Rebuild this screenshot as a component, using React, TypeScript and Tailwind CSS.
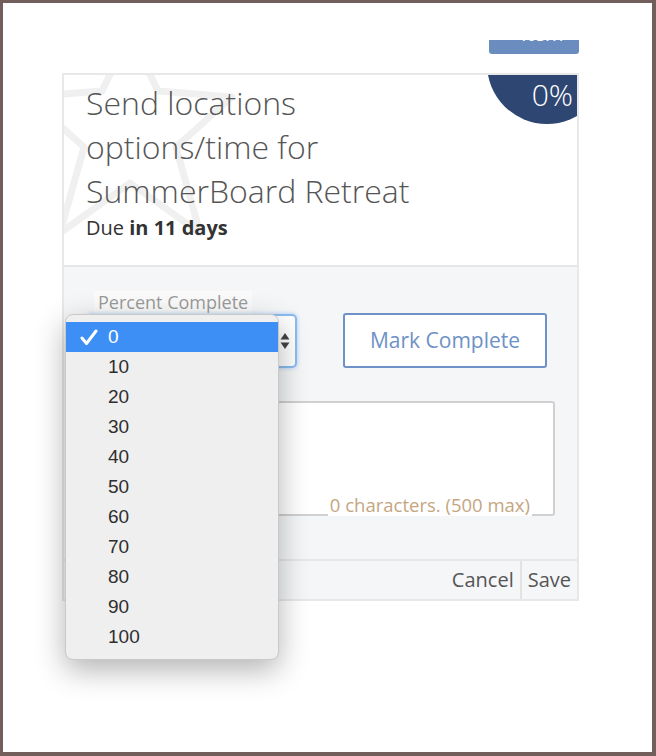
const options = [0, 10, 20, 30, 40, 50, 60, 70, 80, 90, 100]

const font = { fontFamily: '"Open Sans", "Liberation Sans", sans-serif' }

export default function App() {
  return (
    <div
      className="h-[756px] w-[656px] border-t-[3px] border-l-[3px] border-r-4 border-b-4 border-[#725f5b] bg-white"
      style={font}>
      <div className="flex justify-end pr-[73px] pt-[37px]">
        <div className="flex h-[14px] w-[90px] items-end justify-center overflow-hidden rounded-b-[3px] bg-[#6a8cbf]">
          <span className="mb-[10px] text-[20px] leading-none text-white">+ Item</span>
        </div>
      </div>

      <div className="ml-[59px] mt-[19px] w-[517px] border-2 border-[#e8e8e8]">
        {/* header */}
        <div className="relative overflow-hidden border-b-2 border-[#e6e6e6] bg-white px-[22px] pb-[25px] pt-[6px]">
          <svg
            className="pointer-events-none absolute left-[-2px] top-[-2px]"
            width="200"
            height="200"
            viewBox="0 0 200 200"
            fill="none">
            <path
              d="M68 -40 L96 18 L170 24 L114 74 L138 160 L68 110 L-2 160 L22 74 L-34 24 L40 18 Z"
              stroke="#f0f0f0"
              strokeWidth="7"
              strokeLinejoin="round"
            />
          </svg>
          <div className="absolute left-[423px] top-[-71px] h-[120px] w-[120px] rounded-full bg-[#2e4672]" />
          <div className="absolute right-[4px] top-[5px] text-[30px] font-light leading-none text-white">0%</div>
          <h1 className="relative text-[32px] font-light leading-[44px] text-[#555]">
            Send locations
            <br />
            options/time for
            <br />
            SummerBoard Retreat
          </h1>
          <p className="relative mt-[3px] text-[20px] leading-6 text-[#333]">
            Due <span className="font-bold">in 11 days</span>
          </p>
        </div>

        {/* body */}
        <div className="bg-[#f5f6f8] px-[22px] pt-6">
          <div className="flex items-end gap-[46px]">
            <div className="flex flex-col">
              <span className="ml-2 self-start bg-[#fafafa] px-1 text-[18px] leading-[23px] text-[#9a9a9a]">
                Percent Complete
              </span>
              <div className="relative flex h-[54px] w-[211px] items-center justify-end rounded-[5px] border-2 border-[#8bbcf0] bg-white pr-[5px] shadow-[0_0_4px_#a9cdf5]">
                <svg width="10" height="18" viewBox="0 0 10 18">
                  <path d="M5 1 L9.5 7.5 H0.5 Z" fill="#444" />
                  <path d="M5 17 L9.5 10.5 H0.5 Z" fill="#444" />
                </svg>
                {/* native popup */}
                <div
                  className="absolute left-[-23px] top-[-2px] z-10 w-[214px] rounded-[8px] border border-[#c9c9c9] bg-[#efefef] py-[7px] shadow-[0_10px_30px_rgba(0,0,0,0.3)]"
                  style={{ fontFamily: '"Liberation Sans", Arial, sans-serif' }}>
                  {options.map((o) => (
                    <div
                      key={o}
                      className={`flex h-[30px] items-center text-[19px] ${o === 0 ? "bg-[#3d8ff6] text-white" : "text-[#2e2e2e]"}`}>
                      <span className="flex w-[42px] justify-center pl-1">
                        {o === 0 && (
                          <svg width="18" height="17" viewBox="0 0 18 17">
                            <path
                              d="M2 9 L6.5 14.5 L16 2"
                              stroke="white"
                              strokeWidth="3"
                              fill="none"
                              strokeLinecap="round"
                              strokeLinejoin="round"
                            />
                          </svg>
                        )}
                      </span>
                      <span>{o}</span>
                    </div>
                  ))}
                </div>
              </div>
            </div>
            <button className="h-[55px] w-[204px] rounded-[3px] border-2 border-[#6e91c6] bg-white text-[21px] text-[#6e91c6]">
              Mark Complete
            </button>
          </div>

          <div className="relative mt-[33px] h-[115px] w-[469px] rounded-[3px] border-2 border-[#d0d0d0] bg-white">
            <span className="absolute bottom-[-2px] right-[21px] bg-white px-[2px] text-[18.5px] leading-[22px] text-[#c4a67f]">
              0 characters. (500 max)
            </span>
          </div>
          <div className="h-[43px]" />
        </div>

        {/* footer */}
        <div className="flex h-[40px] justify-end border-t-2 border-[#e6e6e6] bg-[#f5f6f8] text-[20px] text-[#555]">
          <button className="px-[6px] leading-[36px]">Cancel</button>
          <div className="w-[2px] bg-[#e3e3e3]" />
          <button className="pl-[6px] pr-[6px] leading-[36px]">Save</button>
        </div>
      </div>
    </div>
  )
}
